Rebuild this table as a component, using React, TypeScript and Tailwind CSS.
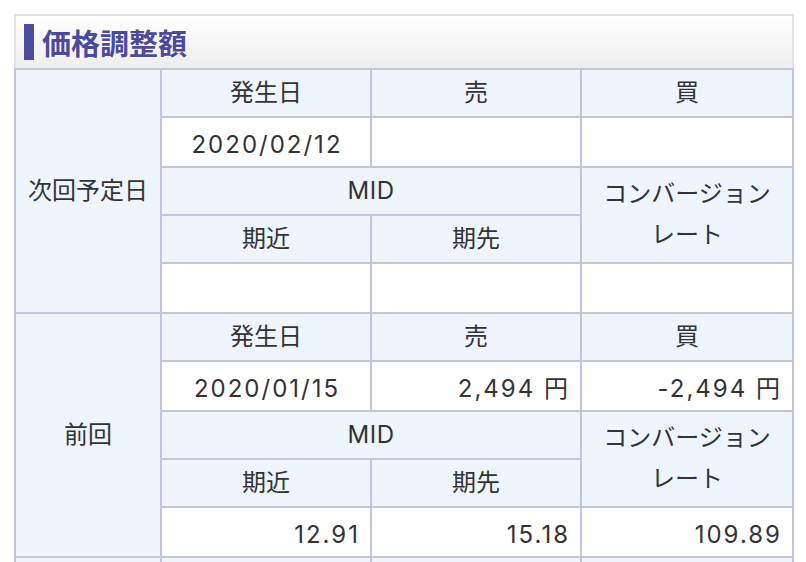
import React from "react";

const blue = "bg-[#eef5fd]";
const white = "bg-white";

function Cell({
  children,
  className = "",
}: {
  children?: React.ReactNode;
  className?: string;
}) {
  return (
    <div className={`flex items-center px-[12px] ${className}`}>{children}</div>
  );
}

function Section({
  label,
  date,
  sell,
  buy,
  near,
  far,
  rate,
  headers = true,
}: {
  label: string;
  date: string;
  sell: string;
  buy: string;
  near: string;
  far: string;
  rate: string;
  headers?: boolean;
}) {
  const num = "pt-[6px] tracking-[2px]";
  return (
    <>
      <Cell className={`${blue} row-span-5 justify-center`}>{label}</Cell>
      <Cell className={`${blue} justify-center`}>{headers ? "発生日" : ""}</Cell>
      <Cell className={`${blue} justify-center`}>{headers ? "売" : ""}</Cell>
      <Cell className={`${blue} justify-center`}>{headers ? "買" : ""}</Cell>
      <Cell className={`${white} ${num} justify-center pl-[14px]`}>{date}</Cell>
      <Cell className={`${white} ${num} justify-end pr-[10px]`}>{sell}</Cell>
      <Cell className={`${white} ${num} justify-end pr-[10px]`}>{buy}</Cell>
      <Cell className={`${blue} col-span-2 justify-center tracking-[0.5px]`}>{headers ? "MID" : ""}</Cell>
      <Cell className={`${blue} row-span-2 justify-center pb-[3px] text-center leading-[41px]`}>
        {headers ? (
          <div>
            <div>コンバージョン</div>
            <div>レート</div>
          </div>
        ) : null}
      </Cell>
      <Cell className={`${blue} justify-center`}>{headers ? "期近" : ""}</Cell>
      <Cell className={`${blue} justify-center`}>{headers ? "期先" : ""}</Cell>
      <Cell className={`${white} ${num} justify-end pr-[10px]`}>{near}</Cell>
      <Cell className={`${white} ${num} justify-end pr-[10px]`}>{far}</Cell>
      <Cell className={`${white} ${num} justify-end pr-[10px]`}>{rate}</Cell>
    </>
  );
}

export default function App() {
  return (
    <div
      className="min-h-[562px] bg-white pt-[14px] pl-[14px] text-[#333333]"
      style={{ fontFamily: 'Inter, "Noto Sans CJK JP", sans-serif' }}
    >
      <div className="w-[780px]">
        <div className="flex h-[54px] items-center border-x-2 border-t-2 border-[#e2e2e2] bg-gradient-to-b from-white to-[#eeeeee] pl-[8px]">
          <div className="h-[36px] w-[10px] bg-[#4b4a9e]" />
          <div
            className="ml-[8px] text-[29px] font-bold leading-none text-[#4b4a9e] [text-shadow:1px_1px_0_#ffffff]"
            style={{ fontFamily: '"Noto Sans CJK JP", sans-serif' }}
          >
            価格調整額
          </div>
        </div>
        <div className="grid grid-cols-[144px_208px_208px_210px] grid-rows-[46px_48px_46px_46px_48px_46px_48px_46px_46px_48px_46px_48px_46px_46px_48px] gap-[2px] bg-[#c4c4dc] p-[2px] text-[24px] leading-none">
          <Section
            label="次回予定日"
            date="2020/02/12"
            sell=""
            buy=""
            near=""
            far=""
            rate=""
          />
          <Section
            label="前回"
            date="2020/01/15"
            sell="2,494 円"
            buy="-2,494 円"
            near="12.91"
            far="15.18"
            rate="109.89"
          />
          <Section
            label=""
            date=""
            sell=""
            buy=""
            near=""
            far=""
            rate=""
            headers={false}
          />
        </div>
      </div>
    </div>
  );
}
